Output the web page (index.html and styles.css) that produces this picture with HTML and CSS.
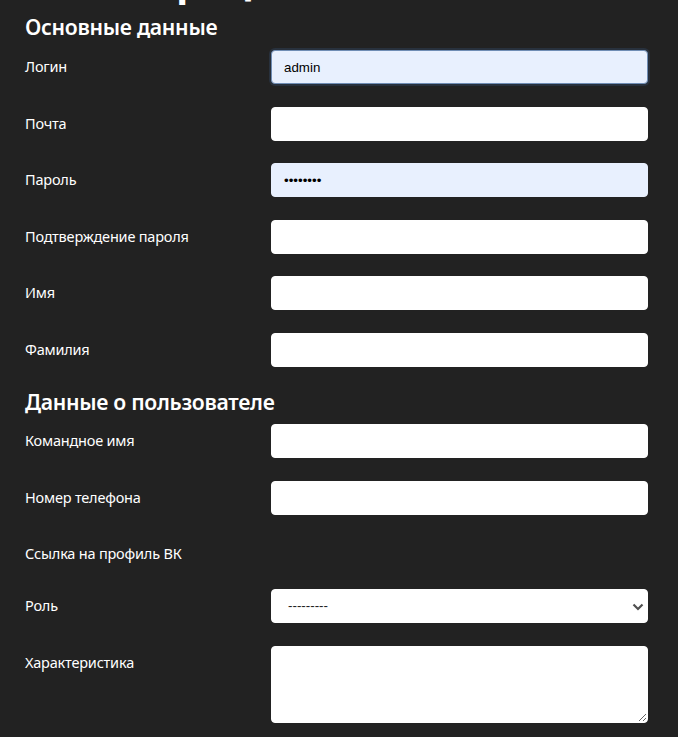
FILE: index.html
```html
<!DOCTYPE html>
<html lang="ru">
<head>
<meta charset="utf-8">
<title>Регистрация</title>
<link rel="stylesheet" href="styles.css">
</head>
<body>
<main class="page">
  <h1 class="title">Регистрация</h1>
  <form class="form">
    <h2 class="section-title">Основные данные</h2>
    <div class="rows">
      <div class="row"><label class="label">Логин</label><input class="field field-autofill field-focus" type="text" value="admin"></div>
      <div class="row"><label class="label">Почта</label><input class="field" type="email"></div>
      <div class="row"><label class="label">Пароль</label><input class="field field-autofill" type="password" value="12345678"></div>
      <div class="row"><label class="label">Подтверждение пароля</label><input class="field" type="password"></div>
      <div class="row"><label class="label">Имя</label><input class="field" type="text"></div>
      <div class="row"><label class="label">Фамилия</label><input class="field" type="text"></div>
    </div>
    <h2 class="section-title section-title-next">Данные о пользователе</h2>
    <div class="rows">
      <div class="row"><label class="label">Командное имя</label><input class="field" type="text"></div>
      <div class="row"><label class="label">Номер телефона</label><input class="field" type="tel"></div>
      <div class="row"><label class="label">Ссылка на профиль ВК</label></div>
      <div class="row"><label class="label">Роль</label>
        <div class="select-wrap">
          <select class="field field-select"><option>---------</option></select>
          <svg class="select-arrow" width="12" height="8" viewBox="0 0 12 8"><path d="M1.5 1.5 L6 6 L10.5 1.5" fill="none" stroke="#505050" stroke-width="2.2"/></svg>
        </div>
      </div>
      <div class="row row-area"><label class="label">Характеристика</label><textarea class="field field-area"></textarea></div>
    </div>
  </form>
</main>
</body>
</html>
```
FILE: styles.css
```css
html, body {
  margin: 0;
  padding: 0;
  background: #222222;
}
body {
  color: #ffffff;
  font-family: "Noto Sans", "Open Sans", sans-serif;
  overflow: hidden;
}
.page {
  padding: 0 30px 0 25px;
}
.title {
  margin: -43px 0 0 0;
  padding-left: 16px;
  font-size: 40px;
  line-height: 48px;
  font-weight: 700;
}
.section-title {
  margin: 9px 0 10px 0;
  font-size: 21.2px;
  line-height: 26px;
  font-weight: 600;
  letter-spacing: -0.3px;
}
.section-title-next {
  margin-top: 22px;
  margin-bottom: 9px;
}
.rows {
  display: flex;
  flex-direction: column;
  gap: 22.6px;
}
.row {
  display: grid;
  grid-template-columns: 246px 377px;
  align-items: start;
}
.row-area {
  padding-top: 1px;
}
.label {
  padding: 5px 0 2px 0;
  font-size: 14.5px;
  line-height: 22px;
  letter-spacing: -0.2px;
}
.field {
  box-sizing: border-box;
  width: 377px;
  height: 34px;
  margin: 0;
  padding: 0 12px;
  border: 1px solid #ffffff;
  border-radius: 4px;
  background: #ffffff;
  color: #000000;
  font-family: "Liberation Sans", Arial, sans-serif;
  font-size: 13.33px;
  outline: none;
}
.field-autofill {
  background: #e8f0fe;
  border-color: #e8f0fe;
}
.field-focus {
  border-color: #6f8db5;
  box-shadow: 0 0 0 2px #28313d;
}
.select-wrap {
  position: relative;
  width: 377px;
}
.field-select {
  appearance: none;
  -webkit-appearance: none;
  padding-left: 16px;
  color: #222222;
}
.select-arrow {
  position: absolute;
  right: 4px;
  top: 14px;
}
.field-area {
  height: 77px;
  padding: 6px 12px;
  resize: vertical;
}
```
